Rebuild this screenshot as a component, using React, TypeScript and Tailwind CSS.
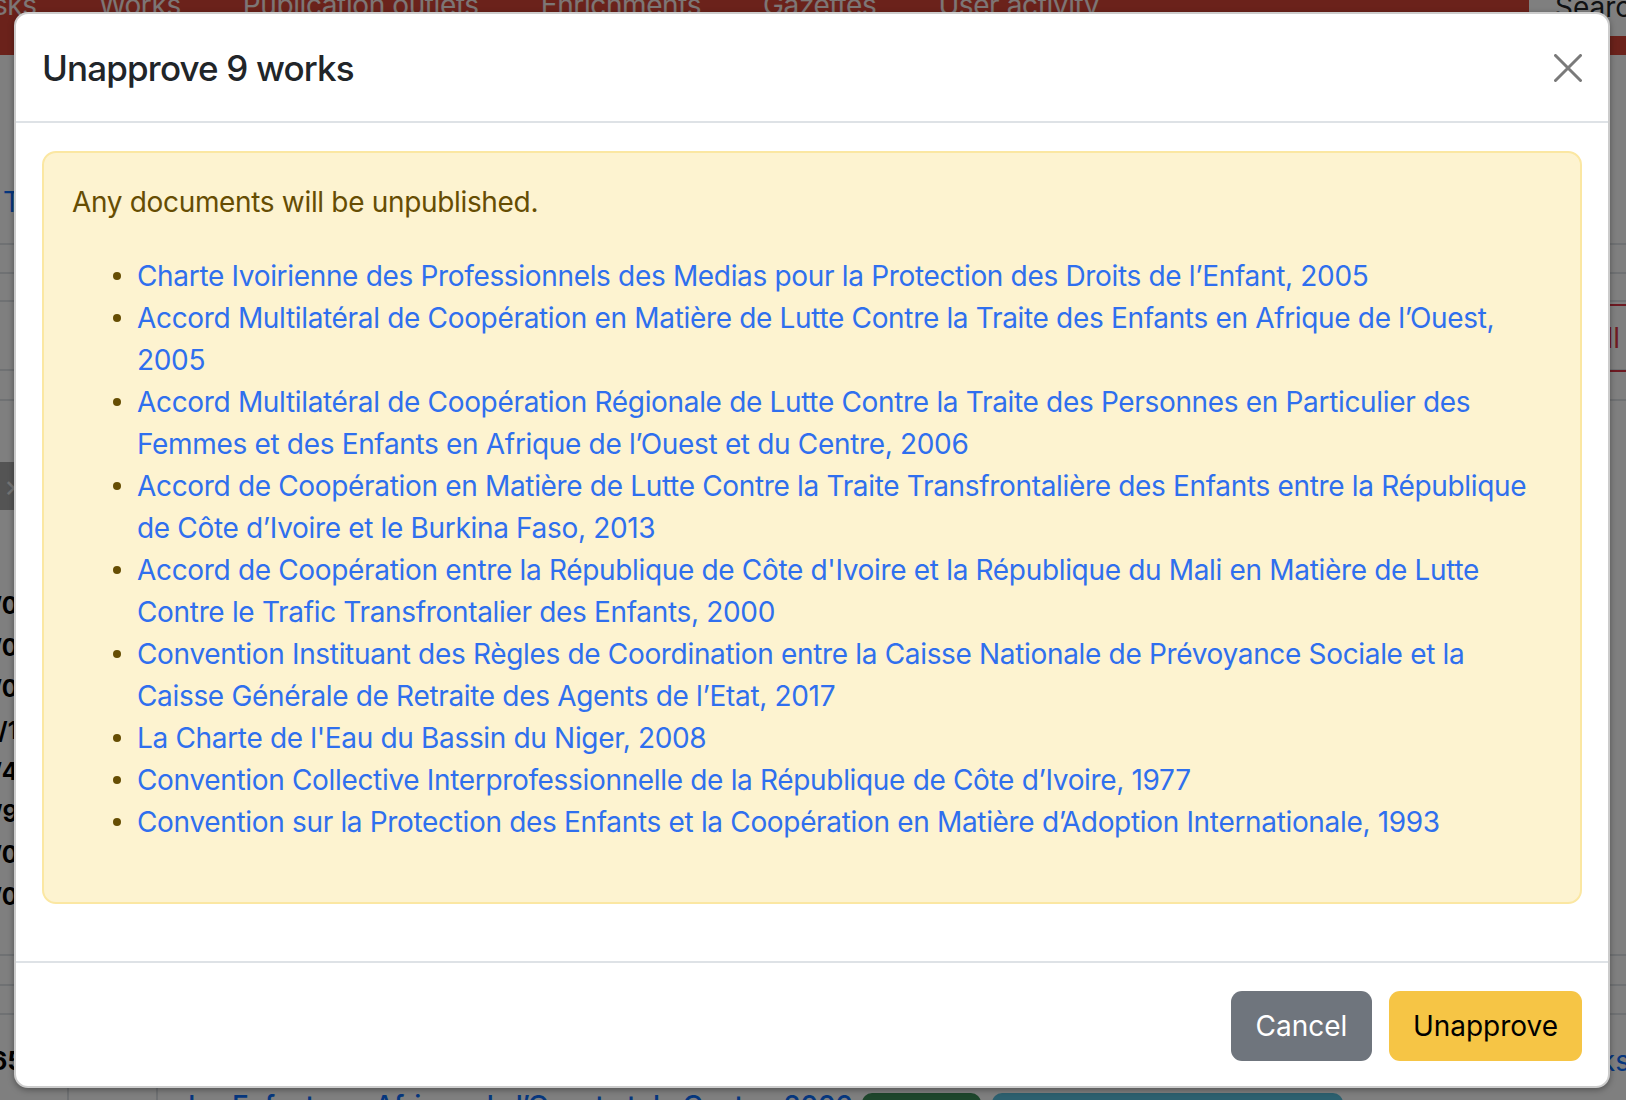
import React from 'react'

const works = [
  'Charte Ivoirienne des Professionnels des Medias pour la Protection des Droits de l’Enfant, 2005',
  'Accord Multilatéral de Coopération en Matière de Lutte Contre la Traite des Enfants en Afrique de l’Ouest, 2005',
  'Accord Multilatéral de Coopération Régionale de Lutte Contre la Traite des Personnes en Particulier des Femmes et des Enfants en Afrique de l’Ouest et du Centre, 2006',
  'Accord de Coopération en Matière de Lutte Contre la Traite Transfrontalière des Enfants entre la République de Côte d’Ivoire et le Burkina Faso, 2013',
  "Accord de Coopération entre la République de Côte d'Ivoire et la République du Mali en Matière de Lutte Contre le Trafic Transfrontalier des Enfants, 2000",
  'Convention Instituant des Règles de Coordination entre la Caisse Nationale de Prévoyance Sociale et la Caisse Générale de Retraite des Agents de l’Etat, 2017',
  "La Charte de l'Eau du Bassin du Niger, 2008",
  'Convention Collective Interprofessionnelle de la République de Côte d’Ivoire, 1977',
  'Convention sur la Protection des Enfants et la Coopération en Matière d’Adoption Internationale, 1993',
]

const navItems = ['Tasks', 'Works', 'Publication outlets', 'Enrichments', 'Gazettes', 'User activity']

const dates = ['2010/0', '2010/0', '2010/0', '1977/1', '1974/4', '2010/9', '2010/0', '2010/0']

// the page that sits behind the backdrop, only its edges show
const BackgroundPage = () => {
  return (
    <div className="flex h-full flex-col overflow-hidden bg-white">
      {/* Navbar */}
      <nav className="flex h-[55px] shrink-0 items-start bg-[#d64436]">
        <div className="-ml-[38px] -mt-[16px] flex gap-[62px] text-[28px] leading-[42px] tracking-[-0.4px] text-white/90 whitespace-nowrap">
          {navItems.map((item) => (
            <span key={item}>{item}</span>
          ))}
        </div>
        <div className="ml-auto h-[36px] w-[97px] overflow-hidden rounded-bl-[8px] bg-white pl-[26px]">
          <span className="-mt-[14px] block text-[28px] leading-[42px] text-[#212529]">Search</span>
        </div>
      </nav>

      {/* Content */}
      <div className="flex flex-1 flex-col">
        <div className="h-[188px] pl-[3px] pt-[126px] text-[28px] leading-[42px] text-[#0d6efd]">Tasks</div>
        <div className="h-[31px] border-y-2 border-[#dee2e6]" />
        <div className="h-[28px] border-b-2 border-[#dee2e6]" />
        <div className="flex h-[69px] justify-end border-b-2 border-[#dee2e6]">
          <button className="-mr-[20px] mt-[2px] h-[68px] rounded-[10px] border-2 border-[#dc3545] px-[24px] text-[28px] text-[#dc3545]">
            Delete all
          </button>
        </div>
        <div className="h-[30px] border-b-2 border-[#dee2e6]" />
        <div className="h-[27px]" />
        <div className="h-[34px]" />
        <div className="flex h-[48px] w-[300px] items-center bg-[#a8a8a8] pl-[4px] text-[30px] text-[#e8e8e8]">×</div>
        <div className="h-[75px]" />
        <div className="flex flex-col">
          {dates.map((d, i) => (
            <div key={i} className="flex h-[41.5px] w-[18px] justify-end whitespace-nowrap text-[24px] font-bold leading-[41.5px] text-black">
              {d}
            </div>
          ))}
        </div>
        <div className="h-[39px] border-b-2 border-[#dee2e6]" />
        <div className="h-[30px] border-b-2 border-[#dee2e6]" />
        <div className="h-[29px] border-b-2 border-[#dee2e6]" />
        <div className="grid flex-1 grid-cols-[67px_89px_1fr]">
          <div className="flex w-[24px] justify-end whitespace-nowrap pt-[25px] text-[26px] font-bold leading-[42px] text-black">1965</div>
          <div className="border-l-2 border-[#dee2e6]" />
          <div className="flex flex-col border-l-2 border-[#dee2e6] pl-[20px]">
            <div className="flex justify-end pt-[25px] text-[28px] leading-[42px] text-[#0d6efd]">
              <span className="-mr-[4px]">Works</span>
            </div>
            <div className="mt-[3px] flex items-start text-[28px] leading-[42px] tracking-[-0.6px]">
              <span className="font-medium text-[#0d6efd]">des Enfants en Afrique de l’Ouest et du Centre, 2006</span>
              <span className="ml-[10px] mt-[8px] h-[40px] w-[119px] rounded-[10px] bg-[#3c8d58]" />
              <span className="ml-[11px] mt-[8px] h-[40px] w-[351px] rounded-[10px] bg-[#5bc0de]" />
            </div>
          </div>
        </div>
      </div>
    </div>
  )
}

const CloseIcon = () => (
  <svg width="28" height="28" viewBox="0 0 28 28" fill="none">
    <path d="M1.5 1.5 L26.5 26.5 M26.5 1.5 L1.5 26.5" stroke="#7a7a7a" strokeWidth="3" strokeLinecap="round" />
  </svg>
)

export default function App() {
  return (
    <div className="relative h-[1100px] w-[1626px] overflow-hidden font-['Inter','Helvetica_Neue',Arial,sans-serif]">
      <BackgroundPage />

      {/* Backdrop */}
      <div className="absolute inset-0 bg-black/50" />

      {/* Modal */}
      <div className="absolute left-[14px] top-[12px] w-[1596px] rounded-[14px] border-2 border-black/20 bg-white shadow-[0_2px_6px_rgba(0,0,0,0.35)]">
        {/* Header */}
        <div className="flex items-center justify-between border-b-2 border-[#dee2e6] pb-[27px] pl-[26px] pr-[20px] pt-[28px]">
          <h5 className="text-[35px] font-medium leading-[52px] tracking-[-0.85px] text-[#212529]">Unapprove 9 works</h5>
          <button className="flex h-[52px] w-[40px] items-center justify-center" aria-label="Close">
            <CloseIcon />
          </button>
        </div>

        {/* Body */}
        <div className="px-[26px] pb-[29px] pt-[28px]">
          <div className="mb-[28px] rounded-[14px] border-2 border-[#fbe7a2] bg-[#fdf3d0] px-[28px] pb-[28px] pt-[28px] text-[28px] leading-[42px] tracking-[-0.33px] text-[#664d03]">
            <p>Any documents will be unpublished.</p>
            <ul className="mb-[31px] mt-[32px] pl-[41px]">
              {works.map((title) => (
                <li key={title} className="flex">
                  <span className="w-[24px] shrink-0">
                    <span className="mt-[17px] block h-[8px] w-[8px] rounded-full bg-[#664d03]" />
                  </span>
                  <a href="#" className="text-[#2f6fee]">
                    {title}
                  </a>
                </li>
              ))}
            </ul>
          </div>
        </div>

        {/* Footer */}
        <div className="flex justify-end gap-[17px] border-t-2 border-[#dee2e6] pb-[25px] pl-[26px] pr-[26px] pt-[28px]">
          <button className="h-[70px] w-[141px] rounded-[11px] bg-[#6f757d] text-[28px] text-white">Cancel</button>
          <button className="h-[70px] w-[193px] rounded-[11px] bg-[#f6c545] text-[28px] text-black">Unapprove</button>
        </div>
      </div>
    </div>
  )
}
